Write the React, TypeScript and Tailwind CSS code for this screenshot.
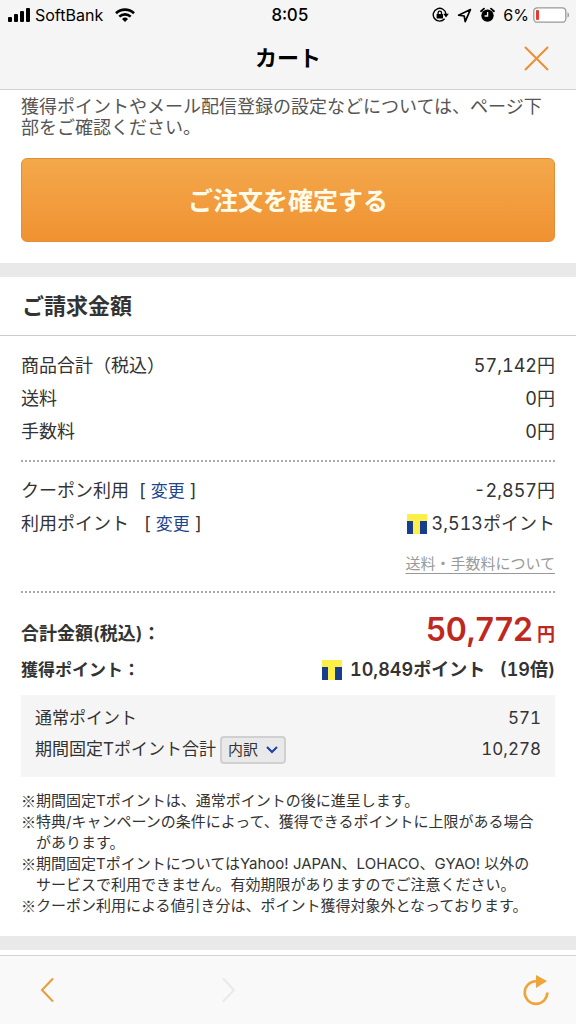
import React from "react";

const charges = [
  { label: "商品合計（税込）", value: "57,142円" },
  { label: "送料", value: "0円" },
  { label: "手数料", value: "0円" },
];

const notes = [
  "期間固定Tポイントは、通常ポイントの後に進呈します。",
  "特典/キャンペーンの条件によって、獲得できるポイントに上限がある場合があります。",
  "期間固定TポイントについてはYahoo! JAPAN、LOHACO、GYAO! 以外のサービスで利用できません。有効期限がありますのでご注意ください。",
  "クーポン利用による値引き分は、ポイント獲得対象外となっております。",
];

const TPointIcon = () => (
  <svg className="shrink-0" width="20" height="20" viewBox="0 0 20 20" role="img" aria-label="Tポイント">
    <rect width="20" height="20" fill="#fdef4a" />
    <rect y="7" width="6" height="13" fill="#173d8f" />
    <rect x="13" y="7" width="7" height="13" fill="#173d8f" />
  </svg>
);

const StatusBar = () => (
  <div className="grid h-[30px] grid-cols-3 items-center px-[7px] text-base text-black">
    <div className="flex items-center gap-1">
      <svg width="24" height="14" viewBox="0 0 24 14">
        <rect x="1" y="9" width="4" height="5" rx="1" />
        <rect x="7" y="6" width="4" height="8" rx="1" />
        <rect x="13" y="3" width="4" height="11" rx="1" />
        <rect x="19" y="0" width="4" height="14" rx="1" />
      </svg>
      <span>SoftBank</span>
      <svg className="ml-2" width="20" height="14" viewBox="0 0 20 14" fill="none" stroke="#000" strokeWidth="2.6">
        <path d="M1 5.2a13 13 0 0 1 18 0" />
        <path d="M4.3 8.6a8.3 8.3 0 0 1 11.4 0" />
        <path d="M7 11a4.4 4.4 0 0 1 6 0l-3 3z" fill="#000" stroke="none" />
      </svg>
    </div>
    <span className="pt-px pl-1 text-center text-[17px] font-medium tabular-nums">8:05</span>
    <div className="flex items-center justify-end">
      <svg className="mr-2" width="17" height="16" viewBox="0 0 17 16">
        <path d="M12.6 11.8A6.4 6.4 0 1 1 14 7" fill="none" stroke="#000" strokeWidth="1.4" />
        <path d="M11.2 6.8h5.6L14 10.4z" />
        <rect x="4.6" y="7" width="6.4" height="4.6" rx=".6" />
        <path d="M6.1 7.2V5.8a1.7 1.7 0 0 1 3.4 0v1.4" fill="none" stroke="#000" strokeWidth="1.3" />
      </svg>
      <svg className="mr-2" width="15" height="15" viewBox="0 0 15 15" fill="none" stroke="#000" strokeWidth="1.7" strokeLinejoin="round">
        <path d="M13.4 1.6L1.6 7.2l5.6.8 1 5.6z" />
      </svg>
      <svg className="mr-2" width="15" height="16" viewBox="0 0 15 16">
        <circle cx="7.5" cy="8.6" r="6.2" />
        <path d="M1 4.2L4 1.6M11 1.6L14 4.2" stroke="#000" strokeWidth="1.8" strokeLinecap="round" />
        <path d="M7.6 5v4H4.6" fill="none" stroke="#f5f5f5" strokeWidth="1.3" />
      </svg>
      <span className="mr-1">6%</span>
      <svg width="36" height="16" viewBox="0 0 36 16">
        <rect x=".8" y=".8" width="32" height="14.4" rx="3.5" fill="#fff" stroke="#999" strokeWidth="1.3" />
        <rect x="3" y="3" width="3" height="10" rx="1" fill="#e8382d" />
        <path d="M34.5 5.2c2 .8 2 4.8 0 5.6z" fill="#999" />
      </svg>
    </div>
  </div>
);

type RowProps = { label: React.ReactNode; children: React.ReactNode };

const Row: React.FC<RowProps> = ({ label, children }) => (
  <div className="flex h-[33px] items-center justify-between">
    <dt className="whitespace-pre">{label}</dt>
    <dd className="flex items-center tabular-nums">{children}</dd>
  </div>
);

const ChangeLink = () => (
  <>
    [ <a href="#change" className="text-[17px] text-[#1d4592]">変更</a> ]
  </>
);

const App: React.FC = () => {
  return (
    <div className="flex min-h-screen flex-col bg-white font-[Inter,'Noto_Sans_CJK_JP',sans-serif] text-[#333]">
      {/* ヘッダー */}
      <header className="border-b border-[#d2d2d2] bg-[#f5f5f5]">
        <StatusBar />
        <div className="grid h-[59px] grid-cols-[1fr_auto_1fr] items-center px-6 pb-1">
          <h1 className="col-start-2 text-[22px] leading-8 font-bold text-black">カート</h1>
          <button type="button" aria-label="閉じる" className="justify-self-end">
            <svg width="30" height="26" viewBox="0 0 30 26" stroke="#ec8e33" strokeWidth="2">
              <path d="M3 2l23 23M26 2L3 25" />
            </svg>
          </button>
        </div>
      </header>

      <main>
        <section className="px-[21px] pt-[6px] pb-[21px]">
          <p className="text-lg leading-[21px] text-[#555]">
            獲得ポイントやメール配信登録の設定などについては、ページ下部をご確認ください。
          </p>
          <button
            type="button"
            className="mt-5 h-[84px] w-full rounded-md border border-[#e08f38] bg-linear-to-b from-[#f3a84a] to-[#f09232] pt-1 text-[25px] font-bold text-[#fffbea]"
          >
            ご注文を確定する
          </button>
        </section>

        {/* ご請求金額 */}
        <section className="border-t-[14px] border-[#e9e9e9]">
          <h2 className="flex h-[59px] items-center border-b border-[#ccc] px-[22px] text-[22px] font-bold">
            ご請求金額
          </h2>
          <div className="px-[21px] text-lg">
            <dl className="border-b-2 border-dotted border-[#aaa] pt-[13px] pb-3">
              {charges.map((charge) => (
                <Row key={charge.label} label={charge.label}>
                  {charge.value}
                </Row>
              ))}
            </dl>

            <div className="border-b-2 border-dotted border-[#aaa] pt-3 pb-4">
              <dl>
                <Row label={<>クーポン利用  <ChangeLink /></>}>-2,857円</Row>
                <Row label={<>利用ポイント   <ChangeLink /></>}>
                  <TPointIcon />
                  <span className="ml-1">3,513ポイント</span>
                </Row>
              </dl>
              <p className="mt-[13px] text-right text-[15px] leading-[22px]">
                <a href="#fees" className="text-[#999] underline underline-offset-4">
                  送料・手数料について
                </a>
              </p>
            </div>

            <dl className="pt-[17px] font-semibold">
              <div className="flex h-11 items-center justify-between">
                <dt className="pt-1">合計金額(税込)：</dt>
                <dd className="flex items-baseline gap-1 leading-10 text-[#bf281e]">
                  <span className="text-[32px]">50,772</span>円
                </dd>
              </div>
              <div className="flex h-8 items-center justify-between">
                <dt className="text-[17px]">獲得ポイント：</dt>
                <dd className="flex items-center gap-2 tabular-nums">
                  <TPointIcon />
                  <span className="whitespace-pre">10,849ポイント   (19倍)</span>
                </dd>
              </div>
            </dl>

            <dl className="mt-[9px] bg-[#f5f5f5] px-[14px] pt-2 pb-3 text-[17px]">
              <div className="flex h-[31px] items-center justify-between">
                <dt>通常ポイント</dt>
                <dd className="tabular-nums">571</dd>
              </div>
              <div className="flex h-[31px] items-center justify-between">
                <dt className="flex items-center gap-1">
                  期間固定Tポイント合計
                  <button
                    type="button"
                    aria-expanded="false"
                    className="flex h-7 w-[66px] items-center justify-center gap-2 rounded border-2 border-[#d0d0d0] bg-[#e9e9e9] text-[15px]"
                  >
                    内訳
                    <svg width="12" height="8" viewBox="0 0 12 8" fill="none" stroke="#1a3faa" strokeWidth="2">
                      <path d="M1 1l5 5 5-5" />
                    </svg>
                  </button>
                </dt>
                <dd className="tabular-nums">10,278</dd>
              </div>
            </dl>

            <ul className="mt-[13px] mb-5 pr-4 text-[15px] leading-[21px]">
              {notes.map((note) => (
                <li key={note} className="flex">
                  <span className="font-['Noto_Sans_CJK_JP',sans-serif]">※</span>
                  <span>{note}</span>
                </li>
              ))}
            </ul>
          </div>
        </section>
        <div className="h-[14px] bg-[#e9e9e9]" />
      </main>

      {/* ツールバー */}
      <footer className="mt-auto flex h-[69px] items-center justify-between border-t border-[#d2d2d2] bg-[#f9f9f9] px-[26px]">
        <div className="flex items-center gap-[168px] pl-[14px]">
          <button type="button" aria-label="戻る">
            <svg width="14" height="26" viewBox="0 0 14 26" fill="none" stroke="#ec9a3a" strokeWidth="2">
              <path d="M13 1.5L2 13l11 11.5" />
            </svg>
          </button>
          <button type="button" aria-label="進む" disabled>
            <svg width="14" height="26" viewBox="0 0 14 26" fill="none" stroke="#e9e9e9" strokeWidth="2">
              <path d="M1 1.5L12 13 1 24.5" />
            </svg>
          </button>
        </div>
        <button type="button" aria-label="再読み込み">
          <svg width="28" height="32" viewBox="0 0 28 32">
            <path d="M14 7.3A11.3 11.3 0 1 0 25.3 18.6" fill="none" stroke="#efa439" strokeWidth="2.6" />
            <path d="M14 1l11 6-11 7z" fill="#efa439" />
          </svg>
        </button>
      </footer>
    </div>
  );
};

export default App;
